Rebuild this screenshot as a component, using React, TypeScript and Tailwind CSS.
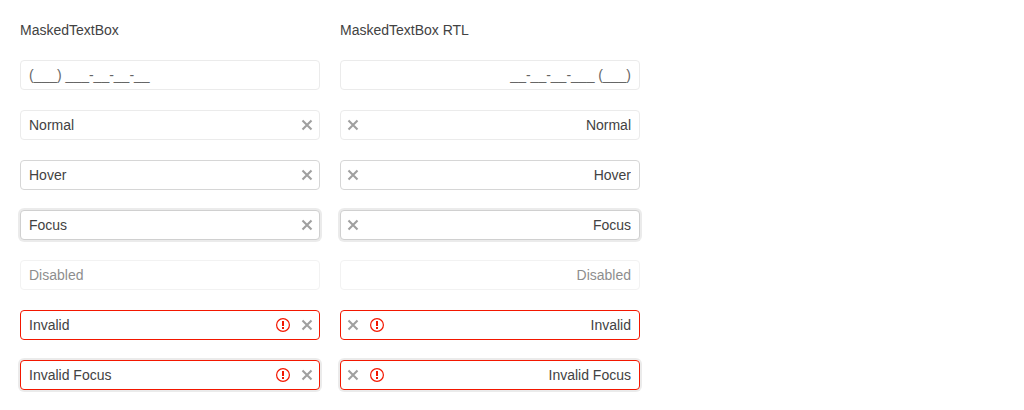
import { useState } from "react";
import clsx from "clsx";

type Status = "normal" | "hover" | "focus" | "disabled" | "invalid" | "invalidFocus";

interface Field {
  label: string;
  value: string;
  status: Status;
  placeholder?: string;
}

const FIELDS: Field[] = [
  { label: "Phone", value: "", status: "normal", placeholder: "(___) ___-__-__-__" },
  { label: "Normal", value: "Normal", status: "normal" },
  { label: "Hover", value: "Hover", status: "hover" },
  { label: "Focus", value: "Focus", status: "focus" },
  { label: "Disabled", value: "Disabled", status: "disabled" },
  { label: "Invalid", value: "Invalid", status: "invalid" },
  { label: "Invalid focus", value: "Invalid Focus", status: "invalidFocus" },
];

const STATUS_CLASSES: Record<Status, string> = {
  normal: "border-[#ebebeb]",
  hover: "border-[#d6d6d6]",
  focus: "border-[#d0d0d0] ring-2 ring-black/8",
  disabled: "border-[#ebebeb] opacity-60",
  invalid: "border-[#f31700]",
  invalidFocus: "border-[#f31700] ring-2 ring-black/8",
};

function ClearIcon() {
  return (
    <svg viewBox="0 0 16 16" className="size-4" fill="none" aria-hidden="true">
      <path d="M3.500 3.500 12.500 12.500M12.500 3.500 3.500 12.500" stroke="currentColor" strokeWidth="2.100" />
    </svg>
  );
}

function WarningIcon() {
  return (
    <svg viewBox="0 0 16 16" className="size-4 shrink-0 text-[#f31700]" fill="currentColor" aria-hidden="true">
      <circle cx="8" cy="8" r="6.400" fill="none" stroke="currentColor" strokeWidth="1.200" />
      <path d="M7 4h2v5H7zM7 10h2v2H7z" />
    </svg>
  );
}

function MaskedTextBox({ field }: { field: Field }) {
  const [value, setValue] = useState(field.value);
  const disabled = field.status === "disabled";
  const invalid = field.status === "invalid" || field.status === "invalidFocus";

  return (
    <div
      className={clsx(
        "flex items-center gap-2 rounded-[4px] border bg-white pe-1",
        STATUS_CLASSES[field.status],
      )}
    >
      <input
        type="text"
        aria-label={field.label}
        aria-invalid={invalid}
        className="min-w-0 flex-1 bg-transparent py-1 ps-2 pe-0 leading-5 outline-none placeholder:text-[#666666] placeholder:opacity-100"
        value={value}
        placeholder={field.placeholder}
        disabled={disabled}
        onChange={(event) => setValue(event.target.value)}
      />
      {invalid && <WarningIcon />}
      {value !== "" && !disabled && (
        <button
          type="button"
          aria-label={`Clear ${field.label}`}
          className="shrink-0 opacity-50"
          onClick={() => setValue("")}
        >
          <ClearIcon />
        </button>
      )}
    </div>
  );
}

function FieldColumn({ title, dir }: { title: string; dir: "ltr" | "rtl" }) {
  return (
    <section className="flex min-w-0 flex-col gap-5">
      <h2>{title}</h2>
      <div dir={dir} className="flex flex-col gap-5">
        {FIELDS.map((field) => (
          <MaskedTextBox key={field.label} field={field} />
        ))}
      </div>
    </section>
  );
}

export default function App() {
  return (
    <main className="grid max-w-[660px] grid-cols-2 gap-5 p-5 font-['Liberation_Sans',Arial,sans-serif] text-sm leading-5 text-[#424242]">
      <FieldColumn title="MaskedTextBox" dir="ltr" />
      <FieldColumn title="MaskedTextBox RTL" dir="rtl" />
    </main>
  );
}
